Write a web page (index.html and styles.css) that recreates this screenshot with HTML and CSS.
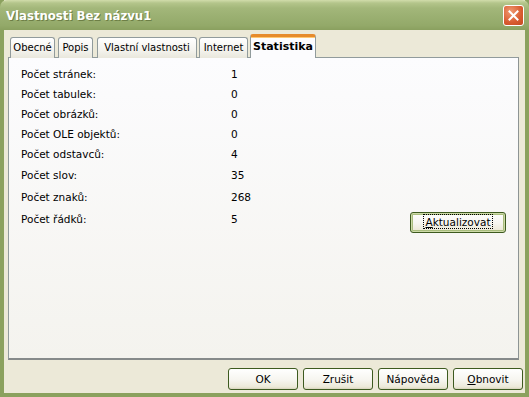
FILE: index.html
```html
<!DOCTYPE html>
<html lang="cs">
<head>
    <meta charset="UTF-8">
    <title>Vlastnosti Bez názvu1</title>
    <link rel="stylesheet" href="styles.css">
</head>
<body>
    <div class="window">
        <div class="titlebar">
            <span class="title">Vlastnosti Bez názvu1</span>
            <button class="close" aria-label="Zavřít">
                <svg width="11" height="11" viewBox="0 0 11 11">
                    <path d="M1.5 1.5 L9.5 9.5 M9.5 1.5 L1.5 9.5" stroke="#fff" stroke-width="2" stroke-linecap="square"/>
                </svg>
            </button>
        </div>

        <div class="tabs">
            <div class="tab tab-obecne">Obecné</div>
            <div class="tab tab-popis">Popis</div>
            <div class="tab tab-vlastni">Vlastní vlastnosti</div>
            <div class="tab tab-internet">Internet</div>
            <div class="tab active">Statistika</div>
        </div>

        <div class="panel">
            <div class="group">
                <div class="row"><span class="label">Počet stránek:</span><span>1</span></div>
                <div class="row"><span class="label">Počet tabulek:</span><span>0</span></div>
                <div class="row"><span class="label">Počet obrázků:</span><span>0</span></div>
                <div class="row"><span class="label">Počet OLE objektů:</span><span>0</span></div>
                <div class="row"><span class="label">Počet odstavců:</span><span>4</span></div>
            </div>
            <div class="group wide">
                <div class="row"><span class="label">Počet slov:</span><span>35</span></div>
                <div class="row"><span class="label">Počet znaků:</span><span>268</span></div>
                <div class="row">
                    <span class="label">Počet řádků:</span><span>5</span>
                    <button class="btn update"><span class="focus-ring"><u>A</u>ktualizovat</span></button>
                </div>
            </div>
        </div>

        <div class="footer">
            <button class="btn">OK</button>
            <button class="btn">Zrušit</button>
            <button class="btn">Nápověda</button>
            <button class="btn"><u>O</u>bnovit</button>
        </div>
    </div>
</body>
</html>
```

FILE: styles.css
```css
html, body {
    margin: 0;
    padding: 0;
}

body {
    font-family: "DejaVu Sans", Verdana, sans-serif;
    font-size: 10.5px;
    color: #000;
    width: 529px;
    height: 397px;
    overflow: hidden;
}

.window {
    box-sizing: border-box;
    width: 529px;
    height: 397px;
    background: #ece9d8;
    border: 4px solid #8ba15e;
    border-top: none;
    display: flex;
    flex-direction: column;
}

.titlebar {
    height: 30px;
    margin: 0 -4px;
    padding: 0 4px 0 6px;
    display: flex;
    align-items: center;
    justify-content: space-between;
    background: linear-gradient(#d1dcab 0, #b4c58b 3px, #a3b77a 8px, #9cb173 50%, #93a969 85%, #8aa05f 100%);
    border-radius: 7px 7px 0 0;
}

.title {
    font-family: "DejaVu Sans Condensed", "DejaVu Sans", sans-serif;
    font-weight: bold;
    font-size: 13px;
    color: #fff;
    text-shadow: 1px 1px 0 #6d7f46;
}

.close {
    width: 21px;
    height: 21px;
    padding: 0;
    margin-right: 1px;
    border: 1px solid #fff;
    border-radius: 3px;
    background: radial-gradient(circle at 35% 30%, #f09a72, #d85b30 60%, #c44b22);
    display: flex;
    align-items: center;
    justify-content: center;
}

.tabs {
    display: flex;
    align-items: flex-end;
    height: 26px;
    margin-top: 1px;
    padding-left: 6px;
    position: relative;
    z-index: 1;
    font-size: 10px;
}

.tab {
    box-sizing: border-box;
    height: 21px;
    margin-right: 3px;
    padding: 4px 0 0;
    text-align: center;
    border: 1px solid #919b9c;
    border-bottom: none;
    border-radius: 3px 3px 0 0;
    background: linear-gradient(#ffffff, #f4f3ee 60%, #e9e7dc);
    margin-bottom: -1px;
    white-space: nowrap;
}

.tab-obecne { width: 45px; }
.tab-popis { width: 35px; margin-right: 4px; }
.tab-vlastni { width: 100px; margin-right: 2px; }
.tab-internet { width: 49px; margin-right: 2px; }

.tab.active {
    width: 66px;
    height: 24px;
    padding: 3px 0 0;
    font-weight: bold;
    font-size: 11px;
    background: #fcfcfe;
    border-top: 3px solid #e68b2c;
    box-shadow: inset 0 1px 0 #ffc873;
}

.panel {
    box-sizing: border-box;
    height: 303px;
    margin: 0 6px 0 4px;
    padding: 6px 12px 0;
    border: 1px solid #919b9c;
    border-right-color: #8d9494;
    border-bottom: 2px solid #868a8a;
    background: linear-gradient(#fcfcfe, #f4f3ee);
}

.row {
    display: flex;
    align-items: center;
    height: 20px;
}

.wide .row {
    height: 22px;
}

.label {
    width: 210px;
}

.btn {
    box-sizing: border-box;
    width: 70px;
    height: 22px;
    padding: 0;
    font-family: inherit;
    font-size: 10.5px;
    color: #000;
    border: 1px solid #3d5a1f;
    border-radius: 3px;
    background: linear-gradient(#ffffff, #f6f5ef 55%, #ece9d8 90%, #d8d3bd);
}

.update {
    width: 96px;
    height: 21px;
    margin-left: auto;
    margin-right: 0;
    margin-top: 6px;
    box-shadow: inset 0 0 0 1px #cddaa8, inset 0 0 0 2px #a9bd7e;
}

.focus-ring {
    outline: 1px dotted #000;
    padding: 1px 1px 0;
}

.footer {
    display: flex;
    justify-content: flex-end;
    gap: 5px;
    margin-top: 8px;
    padding-right: 2px;
}
```
